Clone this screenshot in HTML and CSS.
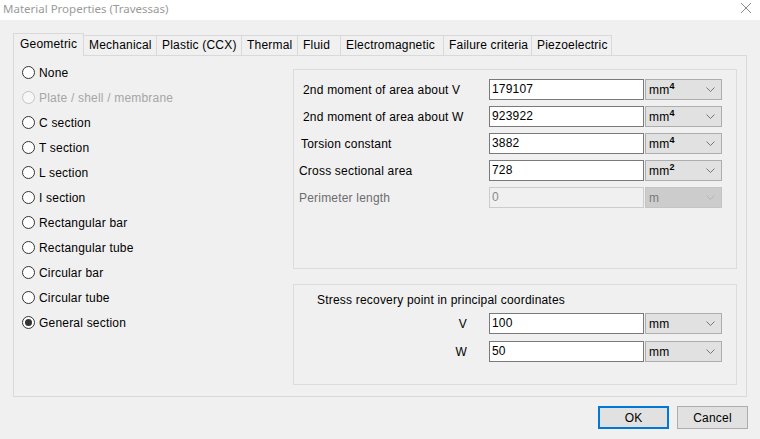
FILE: index.html
```html
<!DOCTYPE html>
<html>
<head>
<meta charset="utf-8">
<link rel="stylesheet" href="styles.css">
</head>
<body>
<div class="window">
  <div class="titlebar">
    <span class="title">Material Properties (Travessas)</span>
    <svg class="close" width="12" height="12" viewBox="0 0 12 12"><path d="M1 1 L11 11 M11 1 L1 11" stroke="#8a8a8a" stroke-width="1" fill="none"/></svg>
  </div>
  <div class="tabs">
    <div class="tab active">Geometric</div>
    <div class="tab">Mechanical</div>
    <div class="tab">Plastic (CCX)</div>
    <div class="tab">Thermal</div>
    <div class="tab">Fluid</div>
    <div class="tab">Electromagnetic</div>
    <div class="tab">Failure criteria</div>
    <div class="tab">Piezoelectric</div>
  </div>
  <div class="panel">
    <div class="radios">
      <div class="radio"><span class="circle"></span>None</div>
      <div class="radio disabled"><span class="circle"></span>Plate / shell / membrane</div>
      <div class="radio"><span class="circle"></span>C section</div>
      <div class="radio"><span class="circle"></span>T section</div>
      <div class="radio"><span class="circle"></span>L section</div>
      <div class="radio"><span class="circle"></span>I section</div>
      <div class="radio"><span class="circle"></span>Rectangular bar</div>
      <div class="radio"><span class="circle"></span>Rectangular tube</div>
      <div class="radio"><span class="circle"></span>Circular bar</div>
      <div class="radio"><span class="circle"></span>Circular tube</div>
      <div class="radio"><span class="circle checked"></span>General section</div>
    </div>
    <div class="groups">
      <div class="group g1">
        <div class="row">
          <span class="label p10">2nd moment of area about V</span>
          <span class="field">179107</span>
          <span class="combo"><span>mm<sup>4</sup></span><svg class="chev" width="9" height="5" viewBox="0 0 9 5"><path d="M0.5 0.5 L4.5 4.5 L8.5 0.5" stroke="#777" fill="none"/></svg></span>
        </div>
        <div class="row">
          <span class="label p10">2nd moment of area about W</span>
          <span class="field">923922</span>
          <span class="combo"><span>mm<sup>4</sup></span><svg class="chev" width="9" height="5" viewBox="0 0 9 5"><path d="M0.5 0.5 L4.5 4.5 L8.5 0.5" stroke="#777" fill="none"/></svg></span>
        </div>
        <div class="row">
          <span class="label p8">Torsion constant</span>
          <span class="field">3882</span>
          <span class="combo"><span>mm<sup>4</sup></span><svg class="chev" width="9" height="5" viewBox="0 0 9 5"><path d="M0.5 0.5 L4.5 4.5 L8.5 0.5" stroke="#777" fill="none"/></svg></span>
        </div>
        <div class="row">
          <span class="label p6">Cross sectional area</span>
          <span class="field">728</span>
          <span class="combo"><span>mm<sup>2</sup></span><svg class="chev" width="9" height="5" viewBox="0 0 9 5"><path d="M0.5 0.5 L4.5 4.5 L8.5 0.5" stroke="#777" fill="none"/></svg></span>
        </div>
        <div class="row">
          <span class="label p6 dis">Perimeter length</span>
          <span class="field off">0</span>
          <span class="combo off"><span>m</span><svg class="chev" width="9" height="5" viewBox="0 0 9 5"><path d="M0.5 0.5 L4.5 4.5 L8.5 0.5" stroke="#b5b5b5" fill="none"/></svg></span>
        </div>
      </div>
      <div class="group g2">
        <div class="gtitle">Stress recovery point in principal coordinates</div>
        <div class="row r2">
          <span class="label axis">V</span>
          <span class="field">100</span>
          <span class="combo"><span>mm</span><svg class="chev" width="9" height="5" viewBox="0 0 9 5"><path d="M0.5 0.5 L4.5 4.5 L8.5 0.5" stroke="#777" fill="none"/></svg></span>
        </div>
        <div class="row r2">
          <span class="label axis">W</span>
          <span class="field">50</span>
          <span class="combo"><span>mm</span><svg class="chev" width="9" height="5" viewBox="0 0 9 5"><path d="M0.5 0.5 L4.5 4.5 L8.5 0.5" stroke="#777" fill="none"/></svg></span>
        </div>
      </div>
    </div>
  </div>
  <div class="buttons">
    <div class="btn ok">OK</div>
    <div class="btn">Cancel</div>
  </div>
</div>
</body>
</html>
```

FILE: styles.css
```css
* { box-sizing: border-box; }
html, body { margin: 0; padding: 0; }
body {
  width: 760px;
  height: 439px;
  background: #f0f0f0;
  font-family: "Liberation Sans", Arial, sans-serif;
  font-size: 12px;
  letter-spacing: 0.2px;
  color: #000;
  overflow: hidden;
}
.window { width: 760px; height: 439px; display: flex; flex-direction: column; }
.titlebar {
  height: 20px;
  background: #fff;
  display: flex;
  align-items: center;
  justify-content: space-between;
  padding: 0 8px 0 3px;
}
.title {
  font-family: "Noto Sans", "Open Sans", sans-serif;
  font-size: 11.5px;
  letter-spacing: 0;
  color: #9a9a9a;
  margin-top: -3px;
}
.close { margin-top: -4px; }
.tabs {
  display: flex;
  align-items: flex-end;
  margin-top: 13px;
  padding-left: 13px;
  height: 22px;
}
.tab {
  height: 20px;
  border: 1px solid #d9d9d9;
  border-bottom: none;
  border-left: none;
  padding: 0 5px;
  line-height: 19px;
  background: #f0f0f0;
  white-space: nowrap;
}
.tab:nth-child(2) { width: 73px; }
.tab:nth-child(3) { width: 85px; }
.tab:nth-child(4) { width: 56px; }
.tab:nth-child(5) { width: 43px; }
.tab:nth-child(6) { width: 103px; }
.tab:nth-child(7) { width: 88px; }
.tab:nth-child(8) { width: 80px; }
.tab.active {
  width: 71px;
  height: 23px;
  border-left: 1px solid #d9d9d9;
  line-height: 21px;
  padding: 0 6px;
  margin-bottom: -1px;
  position: relative;
  z-index: 1;
}
.panel {
  margin: 0 13px;
  height: 342px;
  border: 1px solid #d9d9d9;
  display: flex;
}
.radios {
  width: 279px;
  padding-top: 4px;
  padding-left: 8px;
  display: flex;
  flex-direction: column;
}
.radio {
  height: 25px;
  display: flex;
  align-items: center;
  padding-top: 1px;
}
.circle {
  width: 13px;
  height: 13px;
  border: 1px solid #333;
  border-radius: 50%;
  background: #fff;
  margin-right: 4px;
  display: flex;
  align-items: center;
  justify-content: center;
  margin-top: -1px;
}
.circle.checked::after {
  content: "";
  width: 7px;
  height: 7px;
  border-radius: 50%;
  background: #333;
}
.radio.disabled { color: #a6a6a6; }
.radio.disabled .circle { border-color: #c4c4c4; background: #f7f7f7; }
.groups {
  flex: 1;
  padding: 13px 9px 9px 0;
  display: flex;
  flex-direction: column;
  gap: 15px;
}
.group {
  border: 1px solid #dcdcdc;
}
.g1 { height: 200px; padding-top: 9px; }
.g2 { height: 101px; padding-top: 8px; }
.row {
  display: flex;
  align-items: center;
  height: 21px;
  margin-bottom: 6px;
}
.row.r2 { margin-bottom: 7px; }
.label { width: 195px; flex: none; white-space: nowrap; }
.p10 { padding-left: 9px; }
.p8 { padding-left: 7px; }
.p6 { padding-left: 5px; }
.label.dis { color: #6d6d6d; }
.label.axis { text-align: right; padding-right: 22px; }
.field {
  width: 155px;
  height: 21px;
  border: 1px solid #7a7a7a;
  background: #fff;
  padding-left: 2px;
  line-height: 19px;
  flex: none;
}
.field.off { background: #f0f0f0; border-color: #cccccc; color: #8a8a8a; }
.combo {
  width: 77px;
  height: 21px;
  margin-left: 1px;
  border: 1px solid #adadad;
  background: #e1e1e1;
  display: flex;
  align-items: center;
  justify-content: space-between;
  padding: 0 6px 0 3px;
  flex: none;
}
.combo.off { background: #cccccc; border-color: #c4c4c4; color: #7a7a7a; }
.combo sup { font-size: 9px; font-weight: bold; vertical-align: 5px; line-height: 0; }
.gtitle { padding-left: 23px; height: 20px; line-height: 14px; margin-bottom: 0; }
.buttons {
  display: flex;
  justify-content: flex-end;
  gap: 8px;
  padding: 9px 12px 0 0;
}
.btn {
  width: 71px;
  height: 23px;
  border: 1px solid #adadad;
  background: #e1e1e1;
  display: flex;
  align-items: center;
  justify-content: center;
}
.btn.ok { border: 2px solid #0078d7; }
```
